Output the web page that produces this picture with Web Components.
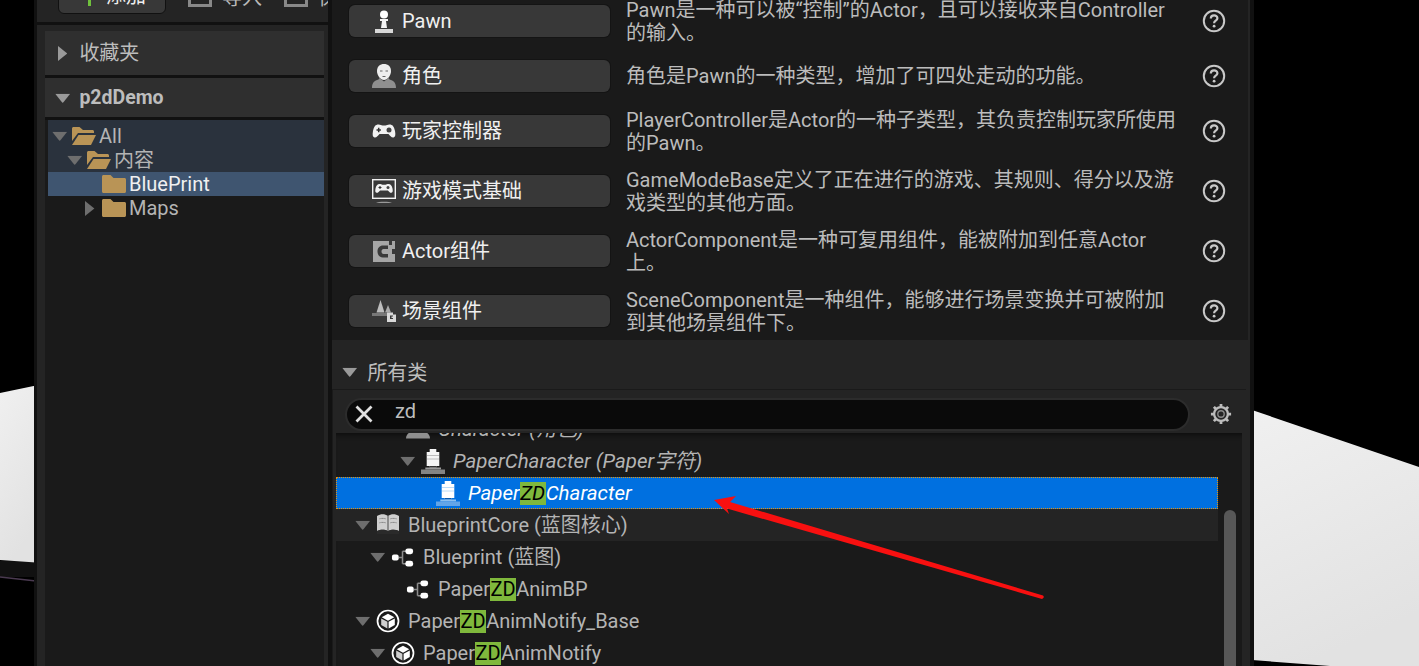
<!DOCTYPE html>
<html lang="zh-CN">
<head>
<meta charset="utf-8">
<title>p2dDemo</title>
<style>
  html, body { margin: 0; height: 100%; background: #000; overflow: hidden; }
  body { font-family: Roboto, "Noto Sans CJK SC", sans-serif; }
</style>
</head>
<body>
<ue-viewport></ue-viewport>
<ue-editor>
  <ue-content-panel slot="left"></ue-content-panel>
  <ue-class-dialog slot="right"></ue-class-dialog>
</ue-editor>
<ue-annotation></ue-annotation>

<script>
const ICONS = {
  pawn: `<svg viewBox="0 0 18 23" width="18" height="23"><circle cx="9" cy="4.500" r="4" fill="#fff"/><path d="M5 9h8v2h-2l1 7H6l1-7H5z" fill="#f4f4f4"/><path d="M0 19h18v4H0z" fill="#d8d8d8"/></svg>`,
  person: `<svg viewBox="0 0 24 24" width="24" height="24"><path d="M12 0c4 0 7 2.600 7 7 0 4.500-3.400 9-7 9s-7-4.500-7-9c0-4.400 3-7 7-7z" fill="#eee"/><path d="M8 7h2.500M13.500 7h2.500M10.500 12.500h3" stroke="#666" stroke-width="1"/><path d="M7.500 14l4.500 3.500 4.500-3.500 1 1.500c4 1 6.500 3 6.500 8.500H0c0-5.500 2.500-7.500 6.500-8.500z" fill="#8f8f8f"/></svg>`,
  pad: `<svg viewBox="0 0 24 15" width="24" height="15"><path d="M6.500 .5c2 0 2.800 1 4 1h3c1.200 0 2-1 4-1 3 0 4.500 2 5.500 6.500.7 3.500.5 6-1.500 6.500-2 .4-3.500-2-5-3.500h-9c-1.500 1.500-3 3.900-5 3.500-2-.5-2.200-3-1.500-6.500C2 2.500 3.500 .5 6.500 .5z" fill="#f2f2f2"/><path d="M4.500 6h4.400M6.700 3.800v4.400" stroke="#333" stroke-width="1.500"/><circle cx="17" cy="6" r="2.500" fill="#444"/></svg>`,
  mode: `<svg viewBox="0 0 24 24" width="24" height="24"><rect x=".7" y=".7" width="22.600" height="18.600" fill="none" stroke="#f2f2f2" stroke-width="1.400"/><path d="M7.500 5c1.500 0 2 .7 3 .7h3c1 0 1.500-.7 3-.7 2.200 0 3.300 1.500 4 4.500.5 2.500.3 4-1 4.300-1.500.3-2.500-1.300-3.600-2.400H8.100C7 12.500 6 14.100 4.500 13.800c-1.300-.3-1.500-1.800-1-4.300C4.200 6.500 5.300 5 7.500 5z" fill="#f2f2f2"/><circle cx="16" cy="8.500" r="1.500" fill="#444"/><path d="M6.500 8.500h3M8 7v3" stroke="#333" stroke-width="1.100"/><path d="M4 24c2-1.800 14-1.800 16 0z" fill="#999"/></svg>`,
  comp: `<svg viewBox="0 0 22 21" width="22" height="21"><path d="M0 0h22v21H0z" fill="#a6a6a6"/><path d="M16 0h3v4h-3zM19 8h3v5h-3z" fill="#3a3a3a"/><path d="M15 4.500H10c-3.300 0-5.500 2.500-5.500 6s2.200 6 5.500 6h5V13h-4.500c-1.200 0-2-1-2-2.500s.8-2.500 2-2.500H15z" fill="#3a3a3a"/></svg>`,
  scene: `<svg viewBox="0 0 24 22" width="24" height="22"><path d="M8.500 0l4 12.500h-8z" fill="#bdbdbd"/><path d="M16 5l3 7.500h-6z" fill="#a9a9a9"/><path d="M0 13h15v3H0z" fill="#777"/><path fill-rule="evenodd" d="M15 12.500h6v2h3V22H15zM18 15.500v3.500h3v-1h-1.500V16.500H21v-1z" fill="#d8d8d8"/></svg>`,
  chess: `<svg viewBox="0 0 24 25" width="24" height="25"><path d="M8.700 0h6.600v3h3v14h-3v1.500H8.700V17h-3V3h3z" fill="#f5f5f5"/><path d="M6 6.500h12M6 10h12" stroke="#bcbcbc"/><path d="M8.700 17h6.600v1.500H8.700z" fill="#333"/><path d="M4.300 18.500H20v2H4.300z" fill="#9a9a9a"/><path d="M0 20.500h24V25H0z" fill="#848484"/></svg>`,
  chessSel: `<svg viewBox="0 0 24 25" width="24" height="25"><path d="M8.700 0h6.600v3h3v14h-3v1.500H8.700V17h-3V3h3z" fill="#fff"/><path d="M6 6.500h12M6 10h12" stroke="#bcdcf8"/><path d="M8.700 17h6.600v1.500H8.700z" fill="#0a57a8"/><path d="M4.300 18.500H20v2H4.300z" fill="#8cc0f0"/><path d="M0 20.500h24V25H0z" fill="#62a5e8"/></svg>`,
  bust: `<svg viewBox="0 0 24 22" width="24" height="22"><circle cx="12" cy="5" r="4" fill="#ddd"/><path d="M0 20.500c0-5 5-8 12-8s12 3 12 8z" fill="#8f8f8f"/></svg>`,
  book: `<svg viewBox="0 0 24 24" width="24" height="24"><defs><filter id="soft"><feGaussianBlur stdDeviation=".5"/></filter></defs><g filter="url(#soft)"><path d="M1 3c4-2.500 8-2 11 0 3-2 7-2.500 11 0v15c-4-2-8-1.500-11 0-3-1.500-7-2-11 0z" fill="#cfcfcf"/><path d="M12 3v15" stroke="#777" stroke-width="1.500"/><path d="M3 6c3-1 5-.8 7 0M14 6c2-.8 4-1 7 0M3 10c3-1 5-.8 7 0M14 10c2-.8 4-1 7 0" stroke="#aaa"/><path d="M1 18c4-2 8-1.500 11 0 3-1.500 7-2 11 0v3H1z" fill="#2c2c2c"/></g></svg>`,
  graph: `<svg viewBox="0 0 25 21" width="25" height="21"><path d="M8 10.500h4M12 4h4M12 17h4M12 4v13" stroke="#8c8c8c" stroke-width="1.600" fill="none"/><rect x="1" y="7.500" width="7" height="6" rx="2" fill="#fff"/><rect x="15" y="1" width="8" height="6" rx="2.500" fill="#fff"/><rect x="15" y="14" width="8" height="6" rx="2.500" fill="#fff"/></svg>`,
  cube: `<svg viewBox="0 0 24 24" width="24" height="24"><circle cx="12" cy="12" r="10.500" fill="none" stroke="#fff" stroke-width="1.700"/><path d="M12 4.800l6.300 3.500-6.300 3.500-6.300-3.500z" fill="#fff"/><path d="M5.200 9.400l6.200 3.400v6.700l-6.200-3.500z" fill="#cfcfcf"/><path d="M18.800 9.400l-6.200 3.400v6.700l6.200-3.500z" fill="#fff"/></svg>`
};

function folderIcon(open) {
  if (open) {
    return `<svg viewBox="0 0 24 18" width="24" height="18"><path d="M0 1.500C0 .7.700 0 1.500 0h6l3.500 3h9.500c.8 0 1.500.7 1.500 1.500V6H6L0 14z" fill="#b99456"/><path d="M6.500 8H24l-5 10H0z" fill="#b99456"/></svg>`;
  }
  return `<svg viewBox="0 0 24 18" width="24" height="18"><path d="M0 1.500C0 .7.700 0 1.500 0h7l3 3h11c.8 0 1.500.7 1.500 1.500V16.500c0 .8-.7 1.500-1.500 1.500h-21C.7 18 0 17.300 0 16.500z" fill="#b99456"/></svg>`;
}

// small triangle used by every collapsible row
function arrow(dir, size, color) {
  const rot = dir === 'down' ? 'rotate(90deg)' : 'none';
  return `<svg viewBox="0 0 10 16" width="${size * 10 / 16}" height="${size}" style="transform:${rot};flex:none"><path d="M0 0l10 8-10 8z" fill="${color}"/></svg>`;
}

class UeViewport extends HTMLElement {
  constructor() {
    super();
    this.attachShadow({ mode: 'open' }).innerHTML = `
      <style>
        :host { display: block; position: absolute; inset: 0; }
        svg { display: block; }
      </style>
      <svg width="1419" height="666" viewBox="0 0 1419 666">
        <defs>
          <linearGradient id="floor" x1="0" y1="0" x2="0.3" y2="1">
            <stop offset="0" stop-color="#f0f0f0"/>
            <stop offset="1" stop-color="#e2e2e2"/>
          </linearGradient>
        </defs>
        <rect width="1419" height="666" fill="#000"/>
        <rect y="561" width="36" height="16" fill="#111"/>
        <path d="M0 393L36 385.500V562.500L0 560z" fill="url(#floor)"/>
        <path d="M0 577L36 581" stroke="#4a3a50" stroke-width="1.500"/>
        <path d="M1252 410L1419 467V666H1330L1252 660z" fill="url(#floor)"/>
      </svg>`;
  }
}

class UeEditor extends HTMLElement {
  constructor() {
    super();
    this.attachShadow({ mode: 'open' }).innerHTML = `
      <style>
        :host { display: block; position: relative; height: 666px; padding-left: 34px; box-sizing: border-box; }
        .frame { display: flex; height: 100%; width: 1220px; }
        ::slotted([slot=left]) { flex: none; width: 294px; }
        ::slotted([slot=right]) { flex: none; width: 926px; }
      </style>
      <div class="frame"><slot name="left"></slot><slot name="right"></slot></div>`;
  }
}

class UeContentPanel extends HTMLElement {
  constructor() {
    super();
    this.attachShadow({ mode: 'open' }).innerHTML = `
      <style>
        :host { display: flex; flex-direction: column; height: 100%; background: #242424; border-left: 3px solid #111; box-sizing: border-box; color: #c0c0c0; overflow: hidden; }
        .toolbar { height: 22px; flex: none; display: flex; align-items: flex-end; padding: 0 4px 8px 21px; box-sizing: border-box; overflow: hidden; white-space: nowrap; font-size: 20px; line-height: 20px; }
        .add { width: 108px; height: 30px; flex: none; background: #383838; border: 1px solid #111; border-radius: 6px; box-sizing: border-box; display: flex; align-items: flex-end; padding: 0 0 7px 29px; gap: 15px; color: #eee; margin-right: 22px; }
        .add i { width: 3px; height: 12px; background: #6fc13c; flex: none; }
        .tool { display: flex; align-items: flex-end; gap: 10px; color: #b8b8b8; margin-bottom: -1px; padding-bottom: 8px; margin-right: 22px; }
        .tool b { width: 24px; height: 14px; border: 3px solid #888; border-top: 0; box-sizing: border-box; flex: none; }
        .tool b + span { margin-bottom: -1px; }
        .sep { height: 3px; background: #111; flex: none; }
        .body { flex: 1; margin: 6px 0 0 8px; width: 279px; background: #1a1a1a; display: flex; flex-direction: column; }
        .head { background: #2f2f2f; display: flex; align-items: center; padding-left: 13px; gap: 12px; flex: none; color: #bdbdbd; box-sizing: border-box; line-height: 24px; font-size: 20px; }
        .head.fav { height: 44px; }
        .head.proj { height: 39px; font-weight: 700; font-size: 19.500px; padding-top: 1px; }
        .gap { height: 3px; background: #111; flex: none; }
        .tree { margin-left: 3px; flex: 1; display: flex; flex-direction: column; }
        .row { height: 24px; display: flex; align-items: center; font-size: 20px; line-height: 24px; color: #b4b4b4; box-sizing: border-box; flex: none; }
        .row .a { width: 24px; flex: none; display: flex; justify-content: center; }
        .row span { margin-left: 3px; }
        .row.cur { background: #2a323d; }
        .row.sel { background: #3f5570; color: #f0f0f0; }
        .row.top { height: 28px; padding-top: 4px; }
      </style>
      <div class="toolbar">
        <div class="add"><i></i><span>添加</span></div>
        <div class="tool"><b></b><span>导入</span></div>
        <div class="tool"><b></b><span>保存</span></div>
      </div>
      <div class="sep"></div>
      <div class="body">
        <div class="head fav">${arrow('right', 15, '#9a9a9a')}<span>收藏夹</span></div>
        <div class="gap"></div>
        <div class="head proj">${arrow('down', 15, '#9a9a9a')}<span>p2dDemo</span></div>
        <div class="gap"></div>
        <div class="tree">
          <div class="row cur top"><div class="a">${arrow('down', 15, '#6e6e6e')}</div>${folderIcon(true)}<span>All</span></div>
          <div class="row cur" style="padding-left:15px"><div class="a">${arrow('down', 15, '#6e6e6e')}</div>${folderIcon(true)}<span>内容</span></div>
          <div class="row sel" style="padding-left:30px"><div class="a"></div>${folderIcon(false)}<span>BluePrint</span></div>
          <div class="row" style="padding-left:30px"><div class="a">${arrow('right', 15, '#6e6e6e')}</div>${folderIcon(false)}<span>Maps</span></div>
        </div>
      </div>`;
  }
}

class UeClassRow extends HTMLElement {
  constructor() {
    super();
    this.attachShadow({ mode: 'open' });
  }

  connectedCallback() {
    const h = this.getAttribute('h') || '60';
    this.shadowRoot.innerHTML = `
      <style>
        :host { display: grid; grid-template-columns: 261px 1fr 24px; column-gap: 16px; align-items: center; height: ${h}px; padding: 0 22px 0 17px; box-sizing: border-box; }
        .btn { height: 32.500px; background: #383838; border-radius: 6px; box-shadow: 0 0 0 1px #141414; display: flex; align-items: center; color: #f0f0f0; font-size: 20px; line-height: 24px; }
        .ic { width: 24px; margin: 0 6px 0 23px; display: flex; justify-content: center; flex: none; }
        .ic svg { display: block; }
        .desc { font-size: 20px; line-height: 23px; color: #bcbcbc; width: 551px; margin-top: 1px; }
        .help { width: 24px; height: 24px; }
      </style>
      <div class="btn"><div class="ic">${ICONS[this.getAttribute('icon')]}</div><span>${this.getAttribute('label')}</span></div>
      <div class="desc"><slot></slot></div>
      <svg class="help" viewBox="0 0 24 24"><circle cx="12" cy="12" r="10.200" fill="none" stroke="#c8c8c8" stroke-width="2"/><path d="M8.800 9.500c0-4.200 6.600-4.200 6.600-.3 0 2.600-3.300 2.400-3.300 5" fill="none" stroke="#c8c8c8" stroke-width="2.200"/><circle cx="12.100" cy="17.200" r="1.400" fill="#c8c8c8"/></svg>`;
  }
}

class UeTreeRow extends HTMLElement {
  constructor() {
    super();
    this.attachShadow({ mode: 'open' });
  }

  connectedCallback() {
    const depth = Number(this.getAttribute('depth') || 0);
    const hasKids = this.hasAttribute('open');
    this.shadowRoot.innerHTML = `
      <style>
        :host { display: flex; align-items: center; height: 32px; width: 882px; padding-left: ${19 + depth * 15}px; box-sizing: border-box; font-size: 20px; line-height: 24px; color: #b4b4b4; white-space: nowrap; flex: none; }
        :host([hover]) { background: #242424; }
        :host([selected]) { background: #0070e0; color: #fff; outline: 1px dotted #e8930c; outline-offset: -1px; }
        :host([italic]) { font-style: italic; font-size: 20.500px; }
        .a { width: 16px; display: flex; justify-content: center; flex: none; }
        .i { width: 24px; margin-left: 5px; margin-right: 8px; display: flex; justify-content: center; flex: none; }
      </style>
      <div class="a">${hasKids ? arrow('down', 15, '#6e6e6e') : ''}</div>
      <div class="i">${ICONS[this.getAttribute('icon')]}</div>
      <span><slot></slot></span>`;
  }
}

class UeHit extends HTMLElement {
  constructor() {
    super();
    this.attachShadow({ mode: 'open' }).innerHTML = `
      <style>
        :host { display: inline-block; background: #7fb83c; color: #000; line-height: 23px; padding: 0 .5px; }
      </style><slot></slot>`;
  }
}

class UeClassDialog extends HTMLElement {
  constructor() {
    super();
    this.attachShadow({ mode: 'open' }).innerHTML = `
      <style>
        :host { display: flex; flex-direction: column; height: 100%; background: #242424; border-left: 4px solid #111; border-right: 4px solid #111; padding-right: 2px; box-sizing: border-box; overflow: hidden; }
        .common { height: 340px; flex: none; background: #1a1a1a; overflow: hidden; }
        .rows { margin-top: -9px; }
        .head { height: 49px; flex: none; display: flex; align-items: center; gap: 13px; padding: 16px 0 0 13px; color: #bdbdbd; font-size: 20px; line-height: 24px; box-sizing: border-box; }
        .box { flex: 1; margin-right: 2px; min-height: 0; display: flex; flex-direction: column; border-top: 1px solid #1a1a1a; border-left: 1px solid #1a1a1a; }
        .bar { height: 43px; flex: none; display: flex; align-items: center; gap: 20px; padding: 5px 14px 0 12px; box-sizing: border-box; position: relative; z-index: 1; }
        .input { flex: 1; height: 33px; background: #0a0a0a; border: 2px solid #2c2c2c; border-radius: 17px; box-sizing: border-box; display: flex; align-items: center; gap: 22px; padding-left: 8px; color: #bdbdbd; font-size: 20px; line-height: 24px; }
        .input span { margin-top: -7px; }
        .list { flex: 1; min-height: 0; margin: 0 4px 0 3px; overflow: hidden; display: flex; background: #1a1a1a; box-shadow: inset 0 6px 5px -4px rgba(0,0,0,.5); }
        .inner { margin-top: -20px; display: flex; flex-direction: column; flex: none; }
        .track { width: 12px; height: 240px; margin: 77px 0 0 6px; background: #575757; border-radius: 6px; flex: none; }
      </style>
      <div class="common"><div class="rows">
        <ue-class-row icon="pawn" label="Pawn">Pawn是一种可以被“控制”的Actor，且可以接收来自Controller的输入。</ue-class-row>
        <ue-class-row h="50" icon="person" label="角色">角色是Pawn的一种类型，增加了可四处走动的功能。</ue-class-row>
        <ue-class-row icon="pad" label="玩家控制器">PlayerController是Actor的一种子类型，其负责控制玩家所使用的Pawn。</ue-class-row>
        <ue-class-row icon="mode" label="游戏模式基础">GameModeBase定义了正在进行的游戏、其规则、得分以及游戏类型的其他方面。</ue-class-row>
        <ue-class-row icon="comp" label="Actor组件">ActorComponent是一种可复用组件，能被附加到任意Actor上。</ue-class-row>
        <ue-class-row icon="scene" label="场景组件">SceneComponent是一种组件，能够进行场景变换并可被附加到其他场景组件下。</ue-class-row>
      </div></div>
      <div class="head">${arrow('down', 15, '#9a9a9a')}<span>所有类</span></div>
      <div class="box">
        <div class="bar">
          <div class="input">
            <svg width="18" height="18" viewBox="0 0 18 18"><path d="M1.500 1.500l15 15M16.500 1.500l-15 15" stroke="#e0e0e0" stroke-width="2.800"/></svg>
            <span>zd</span>
          </div>
          <svg width="22" height="22" viewBox="0 0 24 24"><circle cx="12" cy="12" r="7.500" fill="none" stroke="#bdbdbd" stroke-width="2.500"/><circle cx="12" cy="12" r="3.500" fill="none" stroke="#8a8a8a" stroke-width="1.500"/><path d="M12 1v4M12 19v4M1 12h4M19 12h4M4.200 4.200l2.900 2.900M16.900 16.900l2.900 2.900M19.800 4.200l-2.900 2.900M7.100 16.900l-2.900 2.900" stroke="#bdbdbd" stroke-width="3"/></svg>
        </div>
        <div class="list"><div class="inner">
          <ue-tree-row depth="2" icon="bust" italic>Character (角色)</ue-tree-row>
          <ue-tree-row depth="3" icon="chess" open italic>PaperCharacter (Paper字符)</ue-tree-row>
          <ue-tree-row depth="4" icon="chessSel" selected italic>Paper<ue-hit>ZD</ue-hit>Character</ue-tree-row>
          <ue-tree-row depth="0" icon="book" open hover>BlueprintCore (蓝图核心)</ue-tree-row>
          <ue-tree-row depth="1" icon="graph" open>Blueprint (蓝图)</ue-tree-row>
          <ue-tree-row depth="2" icon="graph">Paper<ue-hit>ZD</ue-hit>AnimBP</ue-tree-row>
          <ue-tree-row depth="0" icon="cube" open>Paper<ue-hit>ZD</ue-hit>AnimNotify_Base</ue-tree-row>
          <ue-tree-row depth="1" icon="cube" open>Paper<ue-hit>ZD</ue-hit>AnimNotify</ue-tree-row>
        </div><div class="track"></div></div>
      </div>`;
  }
}

class UeAnnotation extends HTMLElement {
  constructor() {
    super();
    this.attachShadow({ mode: 'open' }).innerHTML = `
      <style>
        :host { display: block; position: absolute; inset: 0; pointer-events: none; }
      </style>
      <svg width="1419" height="666" viewBox="0 0 1419 666">
        <path d="M714 500L736 496L730 502L1043 595.500Q1045 597.500 1042 599L727 508.500L729 514z" fill="#f81010"/>
      </svg>`;
  }
}

customElements.define('ue-viewport', UeViewport);
customElements.define('ue-editor', UeEditor);
customElements.define('ue-content-panel', UeContentPanel);
customElements.define('ue-class-row', UeClassRow);
customElements.define('ue-tree-row', UeTreeRow);
customElements.define('ue-hit', UeHit);
customElements.define('ue-class-dialog', UeClassDialog);
customElements.define('ue-annotation', UeAnnotation);
</script>
</body>
</html>
